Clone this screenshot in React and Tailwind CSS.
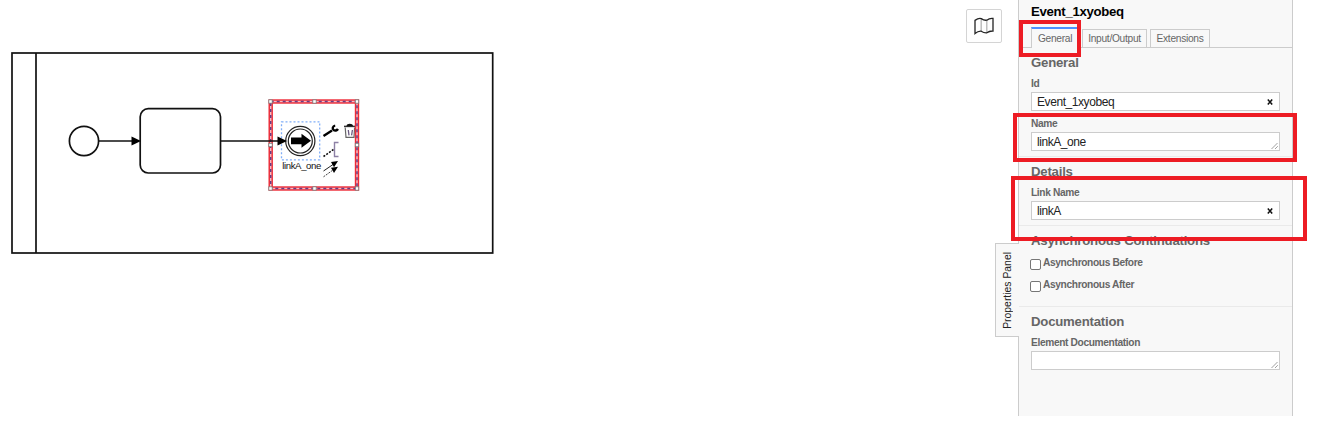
import React from "react";

const handles = [
  [270.5, 101.5], [314.5, 101.5], [357, 101.5],
  [270.5, 145], [357, 145],
  [270.5, 188.5], [314.5, 188.5], [357, 188.5],
];

function Diagram() {
  return (
    <svg width="966" height="426" viewBox="0 0 966 426" fill="none" className="block shrink-0">
      <g stroke="#111" strokeWidth="1.7">
        <rect x="12" y="53" width="480.7" height="200" />
        <path d="M36 53V253" />
        <circle cx="84" cy="141" r="14.6" />
        <rect x="140.2" y="108.7" width="80.3" height="64.3" rx="8" />
        <path d="M99 141H133" />
      </g>
      <path d="M131.5 136.5L141 141L131.5 145.5Z" fill="#000" />
      <rect x="281.5" y="121.8" width="38.2" height="38" stroke="#80aef8" strokeWidth="1.3" strokeDasharray="2 2" />
      <circle cx="300.3" cy="141" r="14.6" stroke="#222" strokeWidth="1.2" />
      <circle cx="300.3" cy="141" r="12" stroke="#222" strokeWidth="1.2" />
      <path d="M291 137.5H301.5V133.8L311 140.8L301.5 147.8V144.2H291Z" fill="#000" />
      <text x="282.3" y="169" fontSize="9.6" textLength="39" fill="#111" fontFamily="'Liberation Sans', Arial, sans-serif">linkA_one</text>

      <path d="M323.5 136L332 130.6" stroke="#000" strokeWidth="2.4" />
      <path d="M335.2 125.6C332.6 126 332 128.8 333.6 130C335 131 337 130.6 338 129" stroke="#000" strokeWidth="2.4" />
      <path d="M323.5 156.5L333.5 149.5" stroke="#111" strokeWidth="1.6" strokeDasharray="2 1.4" />
      <path d="M338.5 142.5H334.5V156.5H338.5" stroke="#8d80a5" strokeWidth="1.4" />
      <path d="M323.5 171L333 164.5" stroke="#222" strokeWidth="1" />
      <path d="M331 162L338 161L334 167.2Z" fill="#000" />
      <path d="M323.5 176.8L333 170" stroke="#444" strokeWidth="1" strokeDasharray="2 1" />
      <path d="M331 167.8L338 166.7L334 173Z" fill="#000" />
      <path d="M344 126.4H355" stroke="#333" strokeWidth="1.5" />
      <path d="M346.5 126.2C346.5 123 353 123 353 126.2Z" fill="#111" />
      <path d="M345.2 127.5L346 137.4H354L354.6 127.5" stroke="#666" strokeWidth="1.2" />
      <path d="M348.3 130L349 135.4M352.4 130L351.6 135.4" stroke="#6a5a80" strokeWidth="1.3" />

      <rect x="270.7" y="101.5" width="86.3" height="87" stroke="#ee2a36" strokeWidth="4.4" />
      <rect x="270.7" y="101.5" width="86.3" height="87" stroke="#f6bcc4" strokeWidth="1.5" />
      <rect x="270.7" y="101.5" width="86.3" height="87" stroke="#6b3c80" strokeWidth="1.5" strokeDasharray="3 3" />
      <path d="M221 141H279" stroke="#111" strokeWidth="1.7" />
      <path d="M277.5 136.5L287 141L277.5 145.5Z" fill="#000" />
      {handles.map(([x, y]) => (
        <rect key={`${x}-${y}`} x={x - 1.7} y={y - 1.7} width="3.4" height="3.4" fill="#fff" stroke="#777" strokeWidth="0.8" />
      ))}
    </svg>
  );
}

function Heading({ children, className = "" }) {
  return <h2 className={`h-4 whitespace-nowrap text-[13.2px] leading-4 font-bold tracking-[-0.22px] text-[#666] ${className}`}>{children}</h2>;
}

function Label({ children, className = "" }) {
  return <div className={`h-3 whitespace-nowrap text-[10.2px] leading-3 font-bold tracking-[-0.36px] text-[#666] ${className}`}>{children}</div>;
}

function Grip() {
  return (
    <svg width="8" height="8" viewBox="0 0 8 8" className="self-end">
      <path d="M0.5 7L6.5 1M4 7L6.8 4.2" stroke="#888" strokeWidth="0.8" fill="none" />
    </svg>
  );
}

function Field({ value, clearable, className = "" }) {
  return (
    <div className={`flex h-[19px] items-center justify-between border border-[#ccc] bg-white pl-[5px] text-[12px] leading-[17px] tracking-[-0.43px] text-[#222] ${className}`}>
      <span className="translate-y-px">{value}</span>
      {clearable ? (
        <svg width="6" height="6" viewBox="0 0 6 6" className="mr-[6px]">
          <path d="M0.8 0.5L5.2 5.5M5.2 0.5L0.8 5.5" stroke="#111" strokeWidth="1.5" />
        </svg>
      ) : (
        <Grip />
      )}
    </div>
  );
}

function Check({ label, className = "" }) {
  return (
    <div className={`-ml-px flex h-3 gap-[2px] ${className}`}>
      <span className="mt-[2px] size-[11px] shrink-0 rounded-[2px] border border-[#767676] bg-white" />
      <Label>{label}</Label>
    </div>
  );
}

function Tabs() {
  return (
    <div className="mt-[7px] flex h-[21px] items-end border-b border-[#ccc] pl-3 text-[10.2px] tracking-[-0.29px] text-[#666]">
      <div className="-mb-px mr-[3px] flex h-[21px] w-12 items-center justify-center border-x border-t-2 border-x-[#ccc] border-t-[#4d90ff] bg-[#f8f8f8]">General</div>
      <div className="mr-[3px] flex h-[18px] w-[65px] items-center justify-center border border-b-0 border-[#ccc]">Input/Output</div>
      <div className="flex h-[18px] w-[60px] items-center justify-center border border-b-0 border-[#ccc]">Extensions</div>
    </div>
  );
}

export default function App() {
  return (
    <div className="relative flex h-[426px] w-[1328px] overflow-hidden bg-white font-['Liberation_Sans',Arial,sans-serif]">
      <Diagram />
      <div className="z-10 flex w-[53px] shrink-0 flex-col pt-[9px]">
        <div className="flex h-[34px] w-9 items-center justify-center rounded-[2px] border border-[#d4d4d4] bg-[#fefefe]">
          <svg width="20" height="18" viewBox="0 0 20 18" fill="none" strokeWidth="1.3">
            <path d="M7.2 1.6V14.2M12.8 3.2V15.6" stroke="#b5b5b5" />
            <path d="M1 3.4Q4.5 0.9 7.2 1.6Q10 3.6 12.8 3.2Q15.5 1 19 1.4V14Q15.5 13.8 12.8 15.8Q10 16 7.2 14.2Q4 14 1 16.6Z" stroke="#222" />
          </svg>
        </div>
        <div className="mt-[200px] flex h-[94px] w-6 items-center justify-center self-end border border-r-0 border-[#ccc] bg-[#f8f8f8]">
          <span className="rotate-180 whitespace-nowrap text-[10.4px] leading-3 text-[#222] [writing-mode:vertical-rl]">Properties Panel</span>
        </div>
      </div>
      <aside className="-ml-px h-[416px] w-[275px] shrink-0 border-x border-[#ccc] bg-[#f8f8f8]">
        <h1 className="mt-1 h-4 pl-3 text-[13.2px] leading-4 font-bold tracking-[-0.3px] text-black">Event_1xyobeq</h1>
        <Tabs />
        <section className="h-[109px] border-b border-[#eaeaea] px-3 pt-[7px]">
          <Heading>General</Heading>
          <Label className="mt-[7px]">Id</Label>
          <Field className="mt-[2px]" value="Event_1xyobeq" clearable />
          <Label className="mt-[7px]">Name</Label>
          <Field className="mt-[2px]" value="linkA_one" />
        </section>
        <section className="h-[69px] border-b border-[#eaeaea] px-3 pt-[7px]">
          <Heading>Details</Heading>
          <Label className="mt-[7px]">Link Name</Label>
          <Field className="mt-[2px]" value="linkA" clearable />
        </section>
        <section className="h-[81px] border-b border-[#eaeaea] px-3 pt-[7px]">
          <Heading>Asynchronous Continuations</Heading>
          <Check className="mt-2" label="Asynchronous Before" />
          <Check className="mt-[10px]" label="Asynchronous After" />
        </section>
        <section className="px-3 pt-[7px]">
          <Heading>Documentation</Heading>
          <Label className="mt-[7px]">Element Documentation</Label>
          <Field className="mt-[2px]" value="" />
        </section>
      </aside>
      <div className="absolute top-[20px] left-[1019px] z-20 h-[37px] w-[62px] border-4 border-[#ed1c24]" />
      <div className="absolute top-[113px] left-[1013px] z-20 h-[49px] w-[284px] border-4 border-[#ed1c24]" />
      <div className="absolute top-[176px] left-[1011px] z-20 h-[65px] w-[296px] border-4 border-[#ed1c24]" />
    </div>
  );
}
